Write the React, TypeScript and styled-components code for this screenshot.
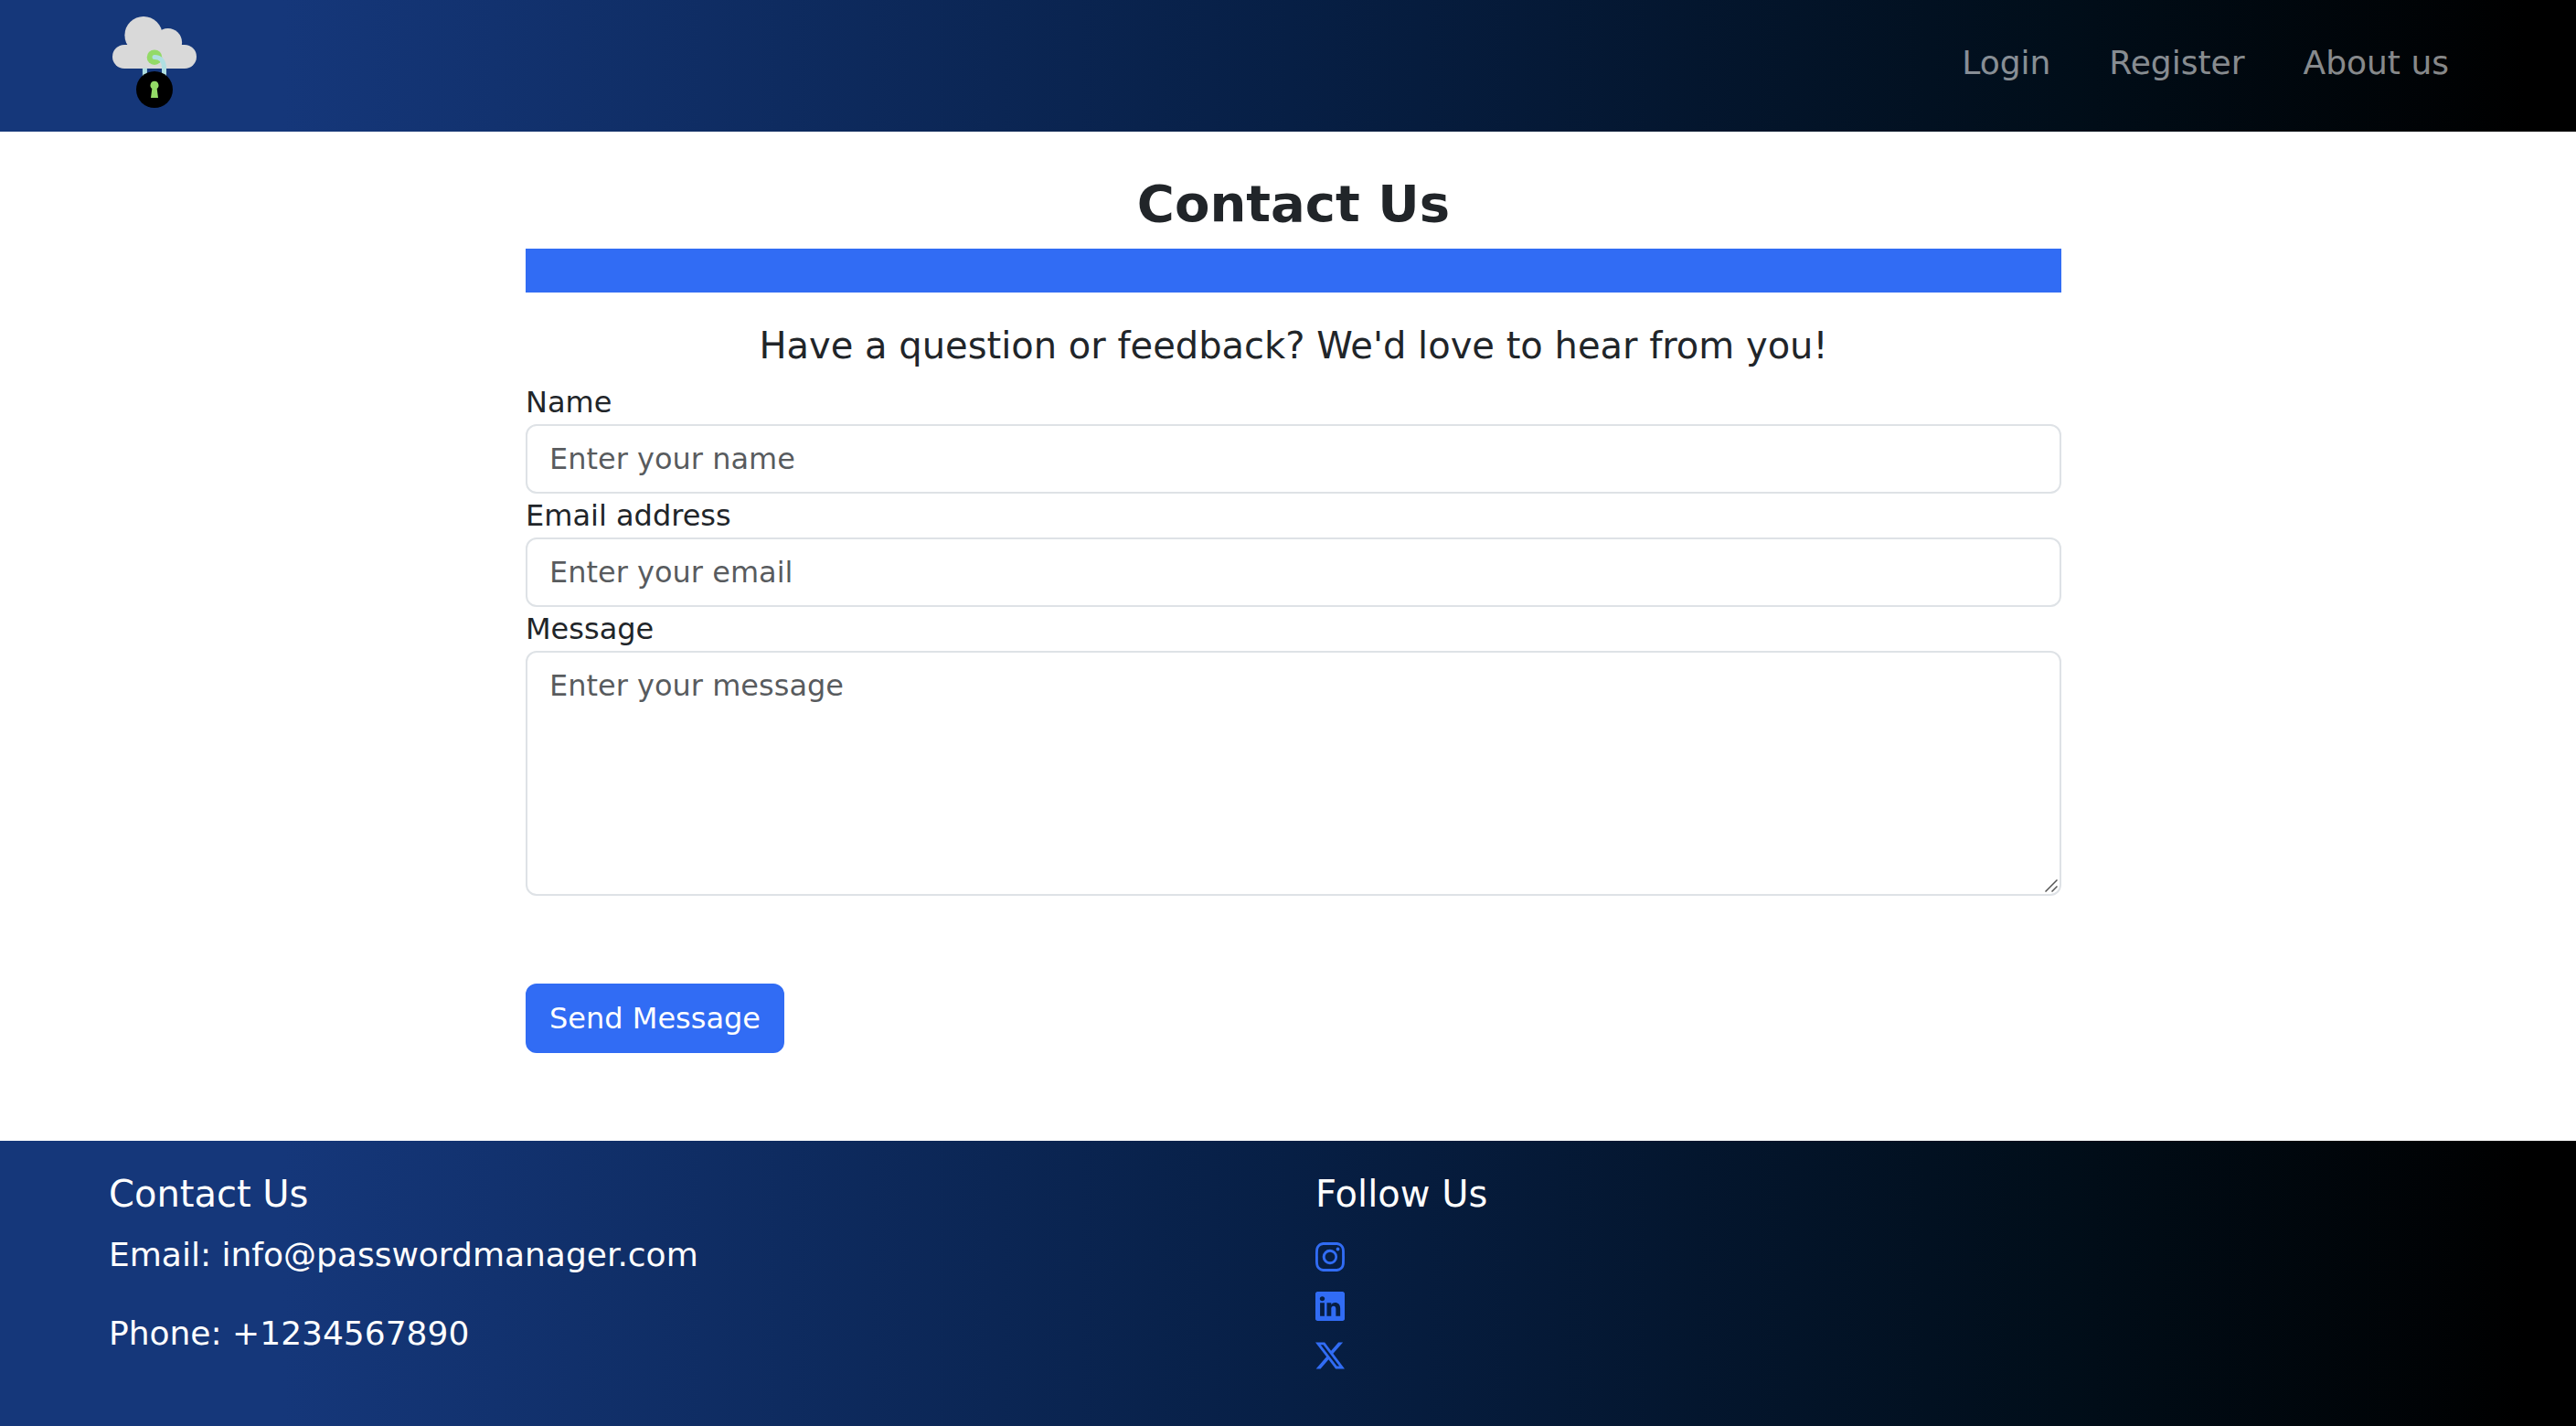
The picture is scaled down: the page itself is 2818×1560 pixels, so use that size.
import React from "react";
import styled, { createGlobalStyle } from "styled-components";
import { BsInstagram, BsLinkedin, BsTwitterX } from "react-icons/bs";

const GlobalStyle = createGlobalStyle`
  *, *::before, *::after { box-sizing: border-box; }
  body {
    margin: 0;
    background: #fff;
    color: #212529;
    font-family: Verdana, "DejaVu Sans", sans-serif;
    font-size: 32px;
    line-height: 48px;
  }
`;

const brandGradient =
  "linear-gradient(to right, #15377a 11%, #071f45 50%, #010e1a 80%, #000000 98%)";

const Page = styled.div`
  min-height: 100vh;
  display: flex;
  flex-direction: column;
`;

const Header = styled.header`
  height: 144px;
  padding-left: 12px;
  background: ${brandGradient};
`;

const Container = styled.div`
  width: 100%;
  max-width: 2640px;
  margin: 0 auto;
  padding: 0 24px;
`;

const Bar = styled(Container)`
  display: flex;
  justify-content: space-between;
  align-items: flex-start;
`;

const Brand = styled.a`
  display: block;
  padding-top: 8px;
  line-height: 0;
`;

const Nav = styled.nav`
  display: flex;
  padding-top: 42px;
`;

const NavLink = styled.a`
  padding: 0 32px;
  font-size: 36px;
  line-height: 54px;
  color: rgba(255, 255, 255, 0.55);
  text-decoration: none;
`;

const Main = styled.main`
  flex: 1;
  padding: 46px 0 96px 12px;
`;

const Contact = styled.section`
  width: 100%;
  max-width: 1680px;
  margin: 0 auto;
`;

const Title = styled.h1`
  margin: 0 0 16px;
  font-size: 56px;
  line-height: 66px;
  font-weight: 700;
  text-align: center;
`;

const Rule = styled.div`
  height: 48px;
  background: #316cf4;
`;

const Lead = styled.p`
  margin: 34px 0 14px;
  font-size: 40px;
  line-height: 48px;
  text-align: center;
`;

const Label = styled.label`
  display: block;
`;

const fieldStyle = `
  display: block;
  width: 100%;
  margin: 0;
  padding: 12px 24px;
  border: 2px solid #dee2e6;
  border-radius: 12px;
  background: #fff;
  color: #212529;
  font: inherit;
  &::placeholder { color: rgba(33, 37, 41, 0.75); opacity: 1; }
`;

const Input = styled.input`
  ${fieldStyle}
  height: 76px;
`;

const AreaWrap = styled.div`
  position: relative;
`;

const TextArea = styled.textarea`
  ${fieldStyle}
  resize: vertical;
  &::-webkit-resizer { display: none; }
`;

const Grip = styled.svg`
  position: absolute;
  right: 4px;
  bottom: 4px;
  pointer-events: none;
`;

const Button = styled.button`
  display: block;
  margin-top: 96px;
  padding: 12px 24px;
  border: 2px solid #316cf4;
  border-radius: 12px;
  background: #316cf4;
  color: #fff;
  font: inherit;
  cursor: pointer;
`;

const Footer = styled.footer`
  min-height: 312px;
  padding: 34px 0 32px 12px;
  background: ${brandGradient};
  color: #fff;
`;

const Columns = styled(Container)`
  display: grid;
  grid-template-columns: 1fr 1fr;
  column-gap: 48px;
`;

const FooterTitle = styled.h2`
  margin: 0 0 16px;
  font-size: 40px;
  line-height: 48px;
  font-weight: 400;
`;

const FooterText = styled.p`
  margin: 0 0 32px;
  font-size: 36px;
  line-height: 54px;
`;

const Social = styled.ul`
  margin: 0;
  padding: 0;
  list-style: none;
`;

const SocialItem = styled.li`
  height: 54px;
  padding-top: 13px;
`;

const SocialLink = styled.a`
  display: inline-flex;
  vertical-align: top;
  color: #316cf4;
`;

const Logo = () => (
  <svg width="96" height="128" viewBox="119 8 96 128" role="img" aria-label="Password Manager">
    <g fill="#d9d9d9">
      <circle cx="136" cy="62" r="13" />
      <circle cx="157" cy="38.5" r="20.6" />
      <circle cx="183.7" cy="46.5" r="15.4" />
      <circle cx="202" cy="62" r="13" />
      <path d="M136 49H202V75H136Z" />
    </g>
    <circle cx="169" cy="62.7" r="8.3" fill="#93da67" />
    <g fill="none" stroke="#b0dfe2" strokeWidth="5">
      <path d="M169 62.5C175.500 62.500 179.500 67 179.500 74V84" strokeLinecap="round" />
      <path d="M158.400 74.700V84" />
    </g>
    <circle cx="169" cy="98" r="20" fill="#000" />
    <path d="M169 88.800a4.500 4.500 0 0 0-2.700 8.100L165 107h8l-1.300-10.100A4.500 4.500 0 0 0 169 88.800Z" fill="#93da67" />
  </svg>
);

export default function App() {
  return (
    <Page>
      <GlobalStyle />
      <Header>
        <Bar>
          <Brand href="#">
            <Logo />
          </Brand>
          <Nav>
            <NavLink href="#login">Login</NavLink>
            <NavLink href="#register">Register</NavLink>
            <NavLink href="#about">About us</NavLink>
          </Nav>
        </Bar>
      </Header>
      <Main>
        <Contact>
          <Title>Contact Us</Title>
          <Rule />
          <Lead>Have a question or feedback? We'd love to hear from you!</Lead>
          <form onSubmit={(e) => e.preventDefault()}>
            <Label htmlFor="name">Name</Label>
            <Input id="name" type="text" placeholder="Enter your name" />
            <Label htmlFor="email">Email address</Label>
            <Input id="email" type="email" placeholder="Enter your email" />
            <Label htmlFor="message">Message</Label>
            <AreaWrap>
              <TextArea id="message" rows={5} placeholder="Enter your message" />
              <Grip width="14" height="14" viewBox="0 0 14 14" stroke="#555" strokeWidth="1.5" aria-hidden="true">
                <path d="M0.500 13.500L13.500 0.500M7.500 13.500L13.500 7.500" />
              </Grip>
            </AreaWrap>
            <Button type="submit">Send Message</Button>
          </form>
        </Contact>
      </Main>
      <Footer>
        <Columns>
          <div>
            <FooterTitle>Contact Us</FooterTitle>
            <FooterText>Email: info@passwordmanager.com</FooterText>
            <FooterText>Phone: +1234567890</FooterText>
          </div>
          <div>
            <FooterTitle>Follow Us</FooterTitle>
            <Social>
              <SocialItem>
                <SocialLink href="#instagram" aria-label="Instagram"><BsInstagram size={32} /></SocialLink>
              </SocialItem>
              <SocialItem>
                <SocialLink href="#linkedin" aria-label="LinkedIn"><BsLinkedin size={32} /></SocialLink>
              </SocialItem>
              <SocialItem>
                <SocialLink href="#x" aria-label="X"><BsTwitterX size={32} /></SocialLink>
              </SocialItem>
            </Social>
          </div>
        </Columns>
      </Footer>
    </Page>
  );
}
